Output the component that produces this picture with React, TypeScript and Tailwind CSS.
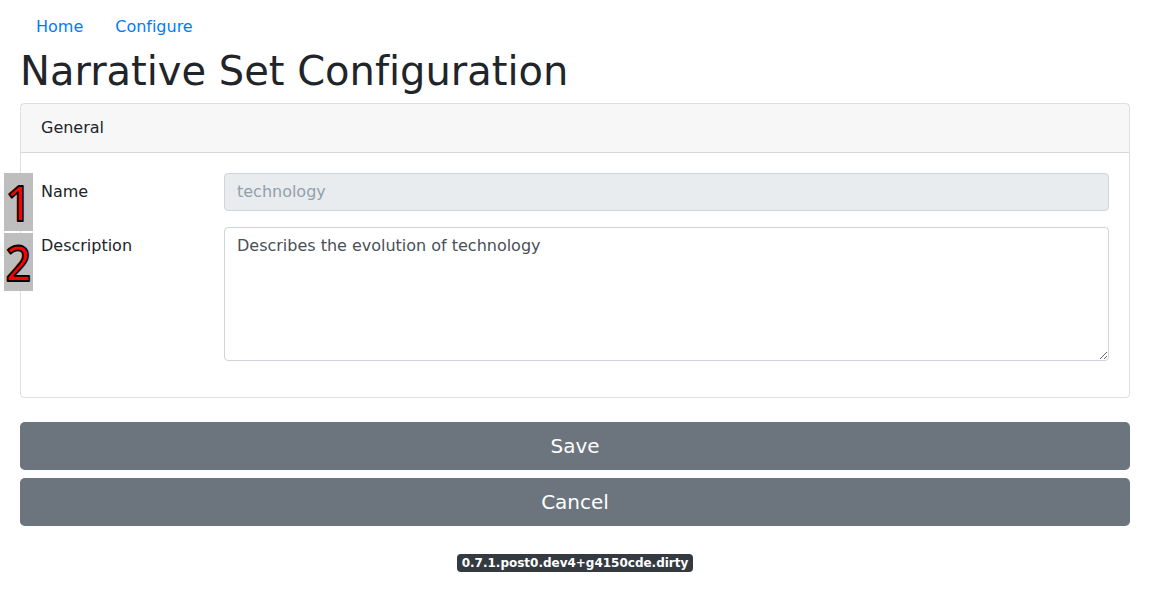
export default function App() {
  return (
    <div className="relative h-[592px] bg-white px-5 font-['DejaVu_Sans',sans-serif] text-base leading-6 tracking-[-0.01px] text-[#212529] [font-variant-ligatures:none]">
      <nav className="flex pt-[7px]">
        <a href="#" className="px-4 py-2 text-[#007bff]">Home</a>
        <a href="#" className="px-4 py-2 text-[#007bff]">Configure</a>
      </nav>
      <h1 className="mb-2 h-12 text-[40px] leading-[48px] font-medium">Narrative Set Configuration</h1>
      <section className="mb-6 h-[295px] rounded-[4px] border border-black/[.125]">
        <div className="border-b border-black/[.125] bg-black/[.03] px-5 py-3">General</div>
        <div className="p-5">
          <div className="mb-4 flex">
            <label className="w-[183px] py-[7px]">Name</label>
            <input disabled defaultValue="technology" className="h-[38px] flex-1 rounded-[4px] border border-[#ced4da] bg-[#e9ecef] px-3 pt-[5px] pb-[7px] text-[#939fab]" />
          </div>
          <div className="flex">
            <label className="w-[183px] py-[7px]">Description</label>
            <textarea defaultValue="Describes the evolution of technology" className="h-[134px] flex-1 resize rounded-[4px] border border-[#ced4da] bg-white px-3 py-1.5 text-[#495057]" />
          </div>
        </div>
      </section>
      <button className="mb-2 block h-12 w-full rounded-[4.8px] bg-[#6c757d] text-xl text-white">Save</button>
      <button className="block h-12 w-full rounded-[4.8px] bg-[#6c757d] text-xl text-white">Cancel</button>
      <footer className="mt-[28px] flex justify-center">
        <span className="h-[18px] rounded-[4px] bg-[#343a40] px-[5px] text-xs leading-[18px] font-bold text-white">0.7.1.post0.dev4+g4150cde.dirty</span>
      </footer>
      <div className="absolute top-[173px] left-1 flex flex-col gap-0.5">
        <svg width="29" height="58" viewBox="0 0 29 58"><rect width="29" height="58" fill="#bebebe" /><text x="1.7" y="47.5" fontFamily="Open Sans, sans-serif" fontWeight="550" fontSize="49" textLength="25.5" lengthAdjust="spacingAndGlyphs" fill="red" stroke="black" strokeWidth="1.8" strokeLinejoin="round">1</text></svg>
        <svg width="29" height="58" viewBox="0 0 29 58"><rect width="29" height="58" fill="#bebebe" /><text x="1.5" y="47.5" fontFamily="Open Sans, sans-serif" fontWeight="550" fontSize="49" textLength="25.5" lengthAdjust="spacingAndGlyphs" fill="red" stroke="black" strokeWidth="1.8" strokeLinejoin="round">2</text></svg>
      </div>
    </div>
  );
}
